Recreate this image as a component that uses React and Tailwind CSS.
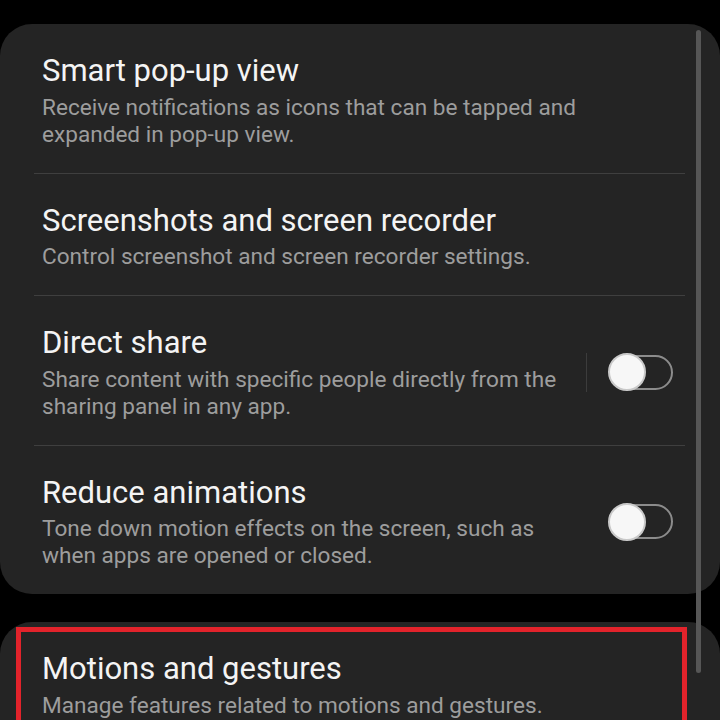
const ROWS = [
  {
    title: 'Smart pop-up view',
    lines: ['Receive notifications as icons that can be tapped and', 'expanded in pop-up view.'],
  },
  {
    title: 'Screenshots and screen recorder',
    lines: ['Control screenshot and screen recorder settings.'],
  },
  {
    title: 'Direct share',
    lines: ['Share content with specific people directly from the', 'sharing panel in any app.'],
    toggle: true,
    divider: true,
  },
  {
    title: 'Reduce animations',
    lines: ['Tone down motion effects on the screen, such as', 'when apps are opened or closed.'],
    toggle: true,
  },
]

function Toggle() {
  return (
    <div className="relative w-[65px] h-[37px] flex items-center">
      <div className="absolute left-[2px] right-0 top-[1px] bottom-[1px] rounded-full border-2 border-[#8c8c8c]" />
      <div className="relative w-[38px] h-[38px] rounded-full bg-[#f7f7f7] border-2 border-[#c9c9c9]" />
    </div>
  )
}

function Row({ row }) {
  return (
    <div className="flex items-center pl-[42px] pr-[47px] pt-[29px] pb-[25px]">
      <div className="flex-1">
        <p className="text-[31px] leading-[36px] text-[#f4f4f4]">{row.title}</p>
        <p className="mt-[4.5px] text-[22.6px] leading-[27px] text-[#9d9d9d] whitespace-nowrap">
          {row.lines.map((l, i) => (
            <span key={i} className="block">{l}</span>
          ))}
        </p>
      </div>
      {row.toggle && (
        <div className="flex items-center">
          <div className={`w-px h-[39px] mr-[21px] ${row.divider ? 'bg-[#3c3c3c]' : 'bg-transparent'}`} />
          <Toggle />
        </div>
      )}
    </div>
  )
}

export default function App() {
  return (
    <div
      className="relative w-[720px] h-[720px] overflow-hidden bg-black pt-[24px]"
      style={{ fontFamily: 'Roboto, "Noto Sans", sans-serif' }}
    >
      {/* Settings card */}
      <div className="bg-[#242424] rounded-[32px]">
        {ROWS.map((row, i) => (
          <div key={i}>
            {i > 0 && <div className="h-px bg-[#3f3f3f] ml-[34px] mr-[35px]" />}
            <Row row={row} />
          </div>
        ))}
      </div>

      {/* Motions and gestures card */}
      <div className="mt-[28px] bg-[#242424] rounded-t-[32px] h-[120px] pt-[5px]">
        <div className="ml-[16px] mr-[33px] border-[5px] border-b-0 border-[#e2232b] h-full pl-[21px] pt-[19px]">
          <p className="text-[31px] leading-[36px] text-[#f4f4f4]">Motions and gestures</p>
          <p className="mt-[4.5px] text-[22.6px] leading-[27px] text-[#9d9d9d]">
            Manage features related to motions and gestures.
          </p>
        </div>
      </div>

      {/* Scrollbar */}
      <div className="absolute left-[696px] top-[30px] w-[5px] h-[643px] rounded-full bg-[#565656]" />
    </div>
  )
}
